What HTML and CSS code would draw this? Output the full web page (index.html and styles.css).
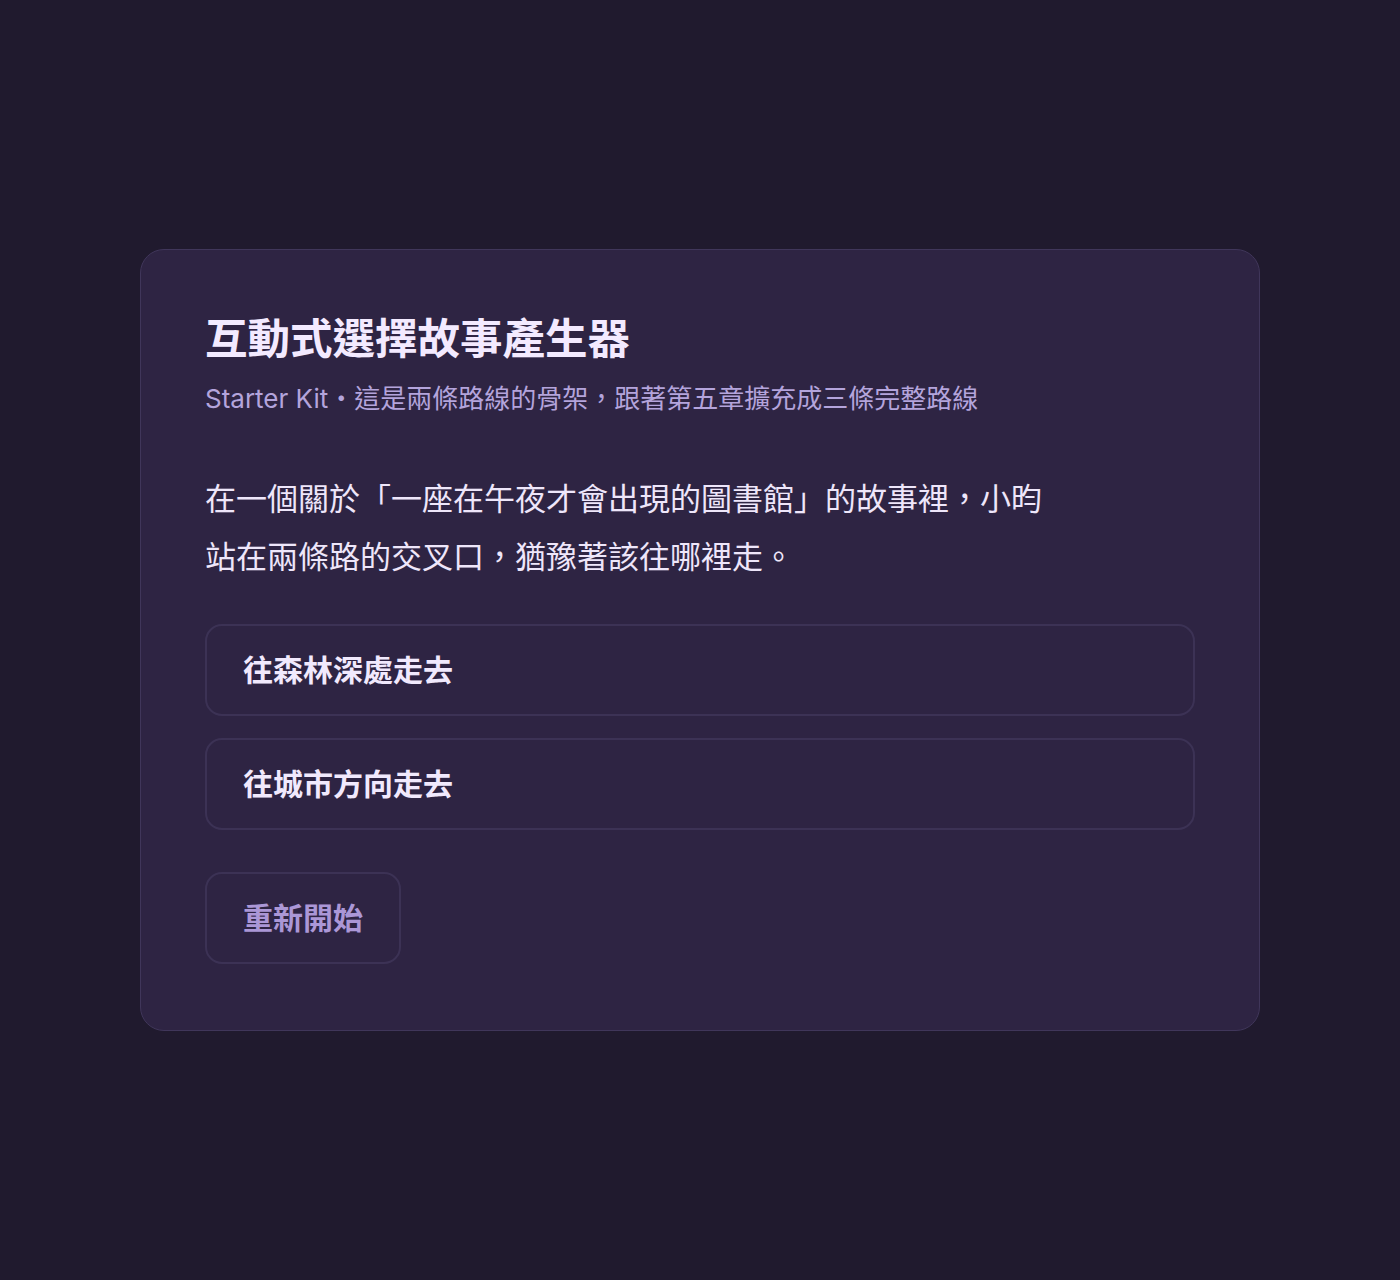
FILE: index.html
```html
<!DOCTYPE html>
<html lang="zh-Hant">
<head>
  <meta charset="UTF-8">
  <meta name="viewport" content="width=device-width, initial-scale=1">
  <title>互動式選擇故事產生器</title>
  <link rel="stylesheet" href="styles.css">
</head>
<body>

  <!-- STORY CARD -->
  <main class="story-card">
    <header class="story-header">
      <h1>互動式選擇故事產生器</h1>
      <p class="subtitle">Starter Kit・這是兩條路線的骨架，跟著第五章擴充成三條完整路線</p>
    </header>

    <p class="story-text">在一個關於「一座在午夜才會出現的圖書館」的故事裡，小昀站在兩條路的交叉口，猶豫著該往哪裡走。</p>

    <div class="choices">
      <button class="choice-btn">往森林深處走去</button>
      <button class="choice-btn">往城市方向走去</button>
    </div>

    <button class="restart-btn">重新開始</button>
  </main>

</body>
</html>
```

FILE: styles.css
```css
/* RESET */
* {
  margin: 0;
  padding: 0;
  box-sizing: border-box;
}

body, html {
  min-height: 100%;
}

body {
  min-height: 100vh;
  display: flex;
  align-items: center;
  justify-content: center;
  background-color: #201a2e;
  font-family: Inter, "Noto Sans CJK TC", sans-serif;
  color: #efe6fb;
}

/* KARTE */
.story-card {
  width: 1120px;
  background-color: #2e2443;
  border: 1px solid #40365a;
  border-radius: 24px;
  padding: 64px 64px 66px;
}

.story-header h1 {
  font-size: 42.5px;
  line-height: 50px;
  font-weight: 700;
  color: #f3eaff;
}

.subtitle {
  margin-top: 14px;
  font-size: 26px;
  line-height: 42px;
  color: #b4a4dc;
}

.story-text {
  margin-top: 50px;
  max-width: 850px;
  font-size: 31px;
  line-height: 58px;
  color: #eee6fa;
}

/* AUSWAHL */
.choices {
  margin-top: 38px;
  display: flex;
  flex-direction: column;
  gap: 22px;
}

.choice-btn,
.restart-btn {
  display: block;
  font-family: inherit;
  font-size: 30px;
  font-weight: 700;
  line-height: 40px;
  text-align: left;
  background-color: #2e2443;
  border: 2px solid #3c3255;
  border-radius: 17px;
  padding: 24px 36px;
  cursor: pointer;
}

.choice-btn {
  width: 100%;
  color: #f1e9fd;
}

.restart-btn {
  margin-top: 42px;
  color: #ab97d6;
}
```
